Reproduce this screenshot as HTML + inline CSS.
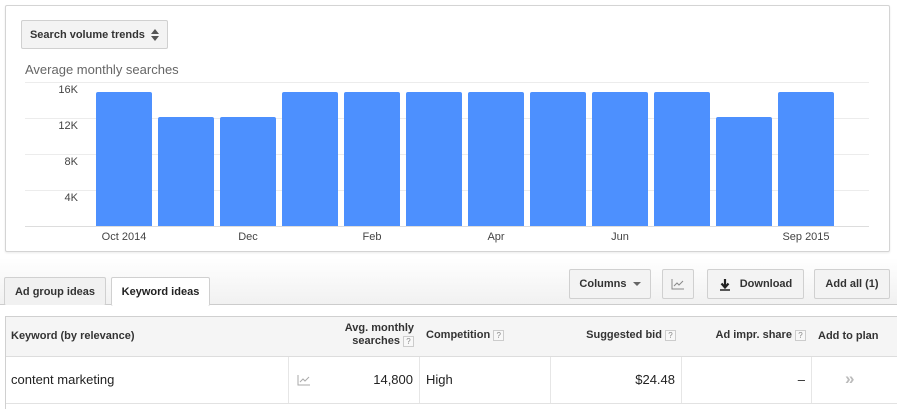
<!DOCTYPE html>
<html><head><meta charset="utf-8"><style>
*{margin:0;padding:0;box-sizing:border-box}
body{width:897px;height:409px;overflow:hidden;background:#fff;font-family:"Liberation Sans",Arial,sans-serif;position:relative;color:#222}
.card{position:absolute;left:5px;top:5px;width:885px;height:247px;border:1px solid #d4d4d4;border-radius:2px;background:#fff;box-shadow:0 1px 2px rgba(0,0,0,.08)}
.abs{position:absolute}
.btn{position:absolute;border:1px solid #d0d0d0;border-radius:2px;background:#f3f3f3;font-size:11px;font-weight:bold;color:#333;display:flex;align-items:center;justify-content:center}
.grid{position:absolute;left:25px;width:844px;height:1px;background:#ececec}
.bar{position:absolute;width:56px;background:#4d90fe;border-radius:2px 2px 0 0}
.yl{position:absolute;font-size:11px;color:#444;width:54px;text-align:right;left:24px}
.xl{position:absolute;font-size:11px;color:#444;top:231px;width:80px;text-align:center}
.q{display:inline-block;width:11px;height:11px;border:1px solid #ccc;font-size:8px;color:#888;text-align:center;line-height:9px;font-weight:normal;vertical-align:middle;background:#f8f8f8}
</style></head><body>
<div class="card"></div>
<div class="btn" style="left:21px;top:20px;width:147px;height:29px;">Search volume trends&nbsp;&nbsp;<svg width="8" height="12"><path d="M4 0L8 5H0Z M4 12L8 7H0Z" fill="#555"/></svg></div>
<div class="abs" style="left:25px;top:62px;font-size:13px;color:#666">Average monthly searches</div>
<div class="grid" style="top:82px"></div>
<div class="grid" style="top:118px"></div>
<div class="grid" style="top:154px"></div>
<div class="grid" style="top:190px"></div>
<div class="grid" style="top:226px;background:#ddd"></div>
<div class="yl" style="top:84px">16K</div>
<div class="yl" style="top:120px">12K</div>
<div class="yl" style="top:156px">8K</div>
<div class="yl" style="top:192px">4K</div>
<div class="bar" style="left:96px;top:92px;height:134px"></div>
<div class="bar" style="left:158px;top:117px;height:109px"></div>
<div class="bar" style="left:220px;top:117px;height:109px"></div>
<div class="bar" style="left:282px;top:92px;height:134px"></div>
<div class="bar" style="left:344px;top:92px;height:134px"></div>
<div class="bar" style="left:406px;top:92px;height:134px"></div>
<div class="bar" style="left:468px;top:92px;height:134px"></div>
<div class="bar" style="left:530px;top:92px;height:134px"></div>
<div class="bar" style="left:592px;top:92px;height:134px"></div>
<div class="bar" style="left:654px;top:92px;height:134px"></div>
<div class="bar" style="left:716px;top:117px;height:109px"></div>
<div class="bar" style="left:778px;top:92px;height:134px"></div>
<div class="xl" style="left:84px">Oct 2014</div>
<div class="xl" style="left:208px">Dec</div>
<div class="xl" style="left:332px">Feb</div>
<div class="xl" style="left:456px">Apr</div>
<div class="xl" style="left:580px">Jun</div>
<div class="xl" style="left:766px">Sep 2015</div>

<div class="abs" style="left:0;top:258px;width:897px;height:47px;background:linear-gradient(#fff,#f1f1f1);border-bottom:1px solid #ccc"></div>
<div class="btn" style="left:4px;top:277px;width:102px;height:28px;background:#f1f1f1;border-bottom:none">Ad group ideas</div>
<div class="btn" style="left:111px;top:277px;width:99px;height:29px;background:#fff;border-bottom:none;color:#222">Keyword ideas</div>
<div class="btn" style="left:569px;top:269px;width:82px;height:30px">Columns&nbsp;&nbsp;<svg width="8" height="5"><path d="M0 0H8L4 4Z" fill="#666"/></svg></div>
<div class="btn" style="left:662px;top:269px;width:32px;height:30px"><svg width="14" height="12"><path d="M1 1V11H13" stroke="#888" fill="none"/><path d="M3 8L6 5L8 7L12 3" stroke="#888" fill="none"/></svg></div>
<div class="btn" style="left:707px;top:269px;width:97px;height:30px"><svg width="12" height="13" style="margin-right:9px"><path d="M6 1V9M2.5 5.5L6 9.5L9.5 5.5" stroke="#222" stroke-width="2.2" fill="none"/><path d="M1 12H11" stroke="#222" stroke-width="1.5"/></svg>Download</div>
<div class="btn" style="left:814px;top:269px;width:76px;height:30px">Add all (1)</div>

<div class="abs" style="left:5px;top:316px;width:892px;height:93px;border:1px solid #d0d0d0;border-right:none;border-bottom:none"></div>
<div class="abs" style="left:6px;top:317px;width:891px;height:40px;background:#f5f5f5;border-bottom:1px solid #ddd"></div>
<div class="abs" style="left:6px;top:403px;width:891px;height:1px;background:#e2e2e2"></div>
<div class="abs" style="left:288px;top:357px;width:1px;height:46px;background:#e6e6e6"></div>
<div class="abs" style="left:419px;top:357px;width:1px;height:46px;background:#e6e6e6"></div>
<div class="abs" style="left:550px;top:357px;width:1px;height:46px;background:#e6e6e6"></div>
<div class="abs" style="left:681px;top:357px;width:1px;height:46px;background:#e6e6e6"></div>
<div class="abs" style="left:811px;top:357px;width:1px;height:46px;background:#e6e6e6"></div>
<div class="abs" style="left:11px;top:330px;font-size:11px;font-weight:bold;color:#333">Keyword (by relevance)</div>
<div class="abs" style="left:320px;top:322px;width:94px;font-size:11px;font-weight:bold;color:#333;text-align:right;line-height:13px">Avg. monthly<br>searches <span class="q">?</span></div>
<div class="abs" style="left:426px;top:329px;font-size:11px;font-weight:bold;color:#333">Competition <span class="q">?</span></div>
<div class="abs" style="left:560px;top:329px;width:116px;text-align:right;font-size:11px;font-weight:bold;color:#333">Suggested bid <span class="q">?</span></div>
<div class="abs" style="left:690px;top:329px;width:116px;text-align:right;font-size:11px;font-weight:bold;color:#333">Ad impr. share <span class="q">?</span></div>
<div class="abs" style="left:818px;top:330px;font-size:11px;font-weight:bold;color:#333">Add to plan</div>
<div class="abs" style="left:11px;top:372px;font-size:13px;color:#222">content marketing</div>
<svg class="abs" style="left:297px;top:374px" width="14" height="12"><path d="M1 1V11H13" stroke="#aaa" fill="none"/><path d="M3 8L6 5L8 7L12 3" stroke="#aaa" fill="none"/></svg>
<div class="abs" style="left:320px;top:372px;width:93px;text-align:right;font-size:13px">14,800</div>
<div class="abs" style="left:426px;top:372px;font-size:13px">High</div>
<div class="abs" style="left:560px;top:372px;width:115px;text-align:right;font-size:13px">$24.48</div>
<div class="abs" style="left:690px;top:372px;width:115px;text-align:right;font-size:13px">–</div>
<div class="abs" style="left:845px;top:369px;font-size:17px;color:#bbb;font-weight:bold">»</div>
</body></html>
